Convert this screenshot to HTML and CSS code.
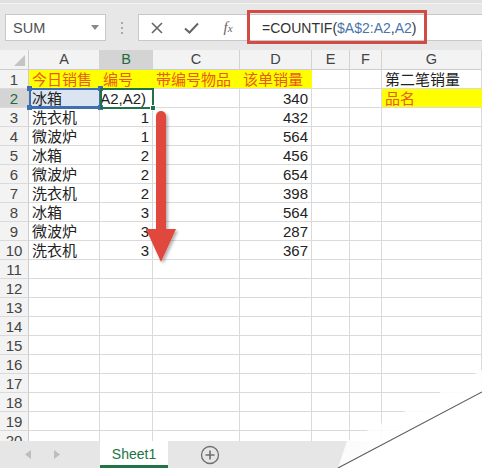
FILE: index.html
```html
<!DOCTYPE html>
<html lang="zh">
<head>
<meta charset="utf-8">
<title>COUNTIF</title>
<link rel="stylesheet" href="styles.css">
</head>
<body>
<div class="app">
  <div class="fbar">
    <div class="namebox"><span>SUM</span><svg class="dd" width="8" height="5" viewBox="0 0 8 5"><path d="M0 0H8L4 5Z" fill="#888"/></svg></div>
    <div class="dots"><i></i><i></i><i></i></div>
    <div class="finput">
      <div class="fbtn"><svg width="12" height="12" viewBox="0 0 12 12"><path d="M1 1L11 11M11 1L1 11" stroke="#666" stroke-width="1.6" fill="none"/></svg></div>
      <div class="fbtn"><svg width="15" height="12" viewBox="0 0 15 12"><path d="M1 6.5L5.5 10.5L14 1.5" stroke="#666" stroke-width="2" fill="none"/></svg></div>
      <div class="fbtn fx">f<sub>x</sub></div>
      <div class="ftext">=COUNTIF(<span class="ref">$A$2:A2</span>,<span class="ref">A2</span>)</div>
    </div>
  </div>

  <div class="sheet">
    <div class="row hdr">
      <div class="corner"><svg width="12" height="12" viewBox="0 0 12 12"><path d="M11 0V11H0Z" fill="#c4c4c4"/></svg></div>
      <div class="ch">A</div><div class="ch on">B</div><div class="ch">C</div><div class="ch">D</div><div class="ch">E</div><div class="ch">F</div><div class="ch">G</div>
    </div>
    <div class="row">
      <div class="rh">1</div><div class="c y">今日销售</div><div class="c y">编号</div><div class="c y">带编号物品</div><div class="c y">该单销量</div><div class="c"></div><div class="c"></div><div class="c">第二笔销量</div>
    </div>
    <div class="row">
      <div class="rh on">2</div><div class="c sel">冰箱</div><div class="c edit"><span>=COUNTIF($A$2:A2,A2)</span></div><div class="c"></div><div class="c n">340</div><div class="c"></div><div class="c"></div><div class="c y">品名</div>
    </div>
    <div class="row">
      <div class="rh">3</div><div class="c">洗衣机</div><div class="c n">1</div><div class="c"></div><div class="c n">432</div><div class="c"></div><div class="c"></div><div class="c"></div>
    </div>
    <div class="row">
      <div class="rh">4</div><div class="c">微波炉</div><div class="c n">1</div><div class="c"></div><div class="c n">564</div><div class="c"></div><div class="c"></div><div class="c"></div>
    </div>
    <div class="row">
      <div class="rh">5</div><div class="c">冰箱</div><div class="c n">2</div><div class="c"></div><div class="c n">456</div><div class="c"></div><div class="c"></div><div class="c"></div>
    </div>
    <div class="row">
      <div class="rh">6</div><div class="c">微波炉</div><div class="c n">2</div><div class="c"></div><div class="c n">654</div><div class="c"></div><div class="c"></div><div class="c"></div>
    </div>
    <div class="row">
      <div class="rh">7</div><div class="c">洗衣机</div><div class="c n">2</div><div class="c"></div><div class="c n">398</div><div class="c"></div><div class="c"></div><div class="c"></div>
    </div>
    <div class="row">
      <div class="rh">8</div><div class="c">冰箱</div><div class="c n">3</div><div class="c"></div><div class="c n">564</div><div class="c"></div><div class="c"></div><div class="c"></div>
    </div>
    <div class="row">
      <div class="rh">9</div><div class="c">微波炉</div><div class="c n">3</div><div class="c"></div><div class="c n">287</div><div class="c"></div><div class="c"></div><div class="c"></div>
    </div>
    <div class="row">
      <div class="rh">10</div><div class="c">洗衣机</div><div class="c n">3</div><div class="c"></div><div class="c n">367</div><div class="c"></div><div class="c"></div><div class="c"></div>
    </div>
    <div class="row"><div class="rh">11</div><div class="c"></div><div class="c"></div><div class="c"></div><div class="c"></div><div class="c"></div><div class="c"></div><div class="c"></div></div>
    <div class="row"><div class="rh">12</div><div class="c"></div><div class="c"></div><div class="c"></div><div class="c"></div><div class="c"></div><div class="c"></div><div class="c"></div></div>
    <div class="row"><div class="rh">13</div><div class="c"></div><div class="c"></div><div class="c"></div><div class="c"></div><div class="c"></div><div class="c"></div><div class="c"></div></div>
    <div class="row"><div class="rh">14</div><div class="c"></div><div class="c"></div><div class="c"></div><div class="c"></div><div class="c"></div><div class="c"></div><div class="c"></div></div>
    <div class="row"><div class="rh">15</div><div class="c"></div><div class="c"></div><div class="c"></div><div class="c"></div><div class="c"></div><div class="c"></div><div class="c"></div></div>
    <div class="row"><div class="rh">16</div><div class="c"></div><div class="c"></div><div class="c"></div><div class="c"></div><div class="c"></div><div class="c"></div><div class="c"></div></div>
    <div class="row"><div class="rh">17</div><div class="c"></div><div class="c"></div><div class="c"></div><div class="c"></div><div class="c"></div><div class="c"></div><div class="c"></div></div>
    <div class="row"><div class="rh">18</div><div class="c"></div><div class="c"></div><div class="c"></div><div class="c"></div><div class="c"></div><div class="c"></div><div class="c"></div></div>
    <div class="row"><div class="rh">19</div><div class="c"></div><div class="c"></div><div class="c"></div><div class="c"></div><div class="c"></div><div class="c"></div><div class="c"></div></div>
    <div class="row"><div class="rh">20</div><div class="c"></div><div class="c"></div><div class="c"></div><div class="c"></div><div class="c"></div><div class="c"></div><div class="c"></div></div>

    <div class="refbox"><i class="h tl"></i><i class="h tr"></i><i class="h bl"></i><i class="h br"></i></div>
    <div class="activebox"><i class="fill"></i></div>
  </div>

  <div class="tabs">
    <div class="nav">
      <svg width="6" height="9" viewBox="0 0 6 9"><path d="M6 0V9L0 4.5Z" fill="#bdbdbd"/></svg>
      <svg width="6" height="9" viewBox="0 0 6 9"><path d="M0 0V9L6 4.5Z" fill="#bdbdbd"/></svg>
    </div>
    <div class="tab">Sheet1</div>
    <div class="add"><svg width="20" height="20" viewBox="0 0 20 20"><circle cx="10" cy="10" r="8.5" stroke="#6f6f6f" stroke-width="1.3" fill="none"/><path d="M10 5.5V14.5M5.5 10H14.5" stroke="#6f6f6f" stroke-width="1.6"/></svg></div>
  </div>
</div>

<svg class="overlay" width="482" height="468" viewBox="0 0 482 468">
  <defs>
    <filter id="sh" x="-50%" y="-10%" width="200%" height="130%">
      <feDropShadow dx="2" dy="2" stdDeviation="1.6" flood-color="#000" flood-opacity="0.3"/>
    </filter>
    <linearGradient id="flap" x1="0" y1="0" x2="1" y2="1" gradientUnits="objectBoundingBox">
      <stop offset="0" stop-color="#fff" stop-opacity="0.55"/>
      <stop offset="0.6" stop-color="#fff" stop-opacity="0.97"/>
      <stop offset="1" stop-color="#f6f6f6" stop-opacity="1"/>
    </linearGradient>
  </defs>
  <rect x="248.5" y="11.5" width="177" height="31" fill="none" stroke="#d24c45" stroke-width="3"/>
  <g filter="url(#sh)" fill="#e0463c">
    <rect x="156" y="111" width="10" height="124" rx="5"/>
    <path d="M146 229H176L161 262Z"/>
  </g>
  <path d="M338 468L347 441L400 414L482 370V392Z" fill="url(#flap)"/>
  <path d="M338 468L482 392V468Z" fill="#fff"/>
  <path d="M338 468L482 392" stroke="#5a5a5a" stroke-width="1.1" fill="none"/>
</svg>
</body>
</html>
```

FILE: styles.css
```css
* { box-sizing: border-box; }

html, body {
  margin: 0;
  padding: 0;
}

body {
  width: 482px;
  height: 468px;
  overflow: hidden;
  position: relative;
  background: #fff;
  font-family: "Liberation Sans", "Noto Sans CJK SC", sans-serif;
  color: #222;
}

.app {
  display: flex;
  flex-direction: column;
  height: 468px;
}

/* formula bar */
.fbar {
  height: 50px;
  flex: none;
  background: #e7e7e7;
  border-top: 3px solid #e0e0e0;
  box-shadow: inset 0 1px 0 #f3f3f3;
  display: flex;
  align-items: flex-start;
  padding-top: 11px;
}

.namebox {
  margin-left: 5px;
  width: 101px;
  height: 27px;
  background: #fff;
  border: 1px solid #c8c8c8;
  display: flex;
  align-items: center;
  justify-content: space-between;
  padding: 0 6px 0 7px;
  font-size: 14.5px;
  color: #505050;
}

.dots {
  width: 32px;
  height: 27px;
  display: flex;
  flex-direction: column;
  align-items: center;
  justify-content: center;
  gap: 3px;
}

.dots i {
  display: block;
  width: 2px;
  height: 2px;
  background: #a9a9a9;
}

.finput {
  flex: 1;
  height: 27px;
  background: #fff;
  border: 1px solid #c8c8c8;
  border-right: none;
  display: flex;
  align-items: center;
}

.fbtn {
  width: 35px;
  height: 25px;
  display: flex;
  align-items: center;
  justify-content: center;
  flex: none;
}

.fx {
  width: 38px;
  font-family: "Liberation Serif", serif;
  font-style: italic;
  font-size: 15px;
  color: #666;
}

.fx sub {
  font-size: 11px;
  vertical-align: -2px;
}

.ftext {
  padding-left: 15px;
  font-size: 14px;
  color: #333;
  white-space: nowrap;
}

.ftext .ref { color: #4a74a8; }

/* sheet grid */
.sheet {
  position: relative;
  height: 391px;
  flex: none;
  overflow: hidden;
}

.row {
  display: grid;
  grid-template-columns: 29px 71px 53px 87px 72px 38px 32px 100px;
  height: 19px;
}

.row.hdr { height: 20px; }

.corner,
.ch,
.rh,
.c {
  display: flex;
  align-items: center;
  white-space: nowrap;
  line-height: 1;
}

.corner {
  background: #f3f3f3;
  border-right: 1px solid #cdcdcd;
  border-bottom: 1px solid #cdcdcd;
  justify-content: flex-end;
  align-items: flex-end;
  padding: 0 2px 2px 0;
}

.ch {
  justify-content: center;
  background: #f3f3f3;
  border-right: 1px solid #d3d3d3;
  border-bottom: 1px solid #cdcdcd;
  font-size: 14.5px;
  color: #444;
}

.rh {
  justify-content: center;
  background: #f3f3f3;
  border-right: 1px solid #cdcdcd;
  border-bottom: 1px solid #dadada;
  font-size: 15px;
  color: #444;
}

.ch.on,
.rh.on {
  background: #d4d4d4;
  color: #1d6a3f;
}

.c {
  border-right: 1px solid #dadada;
  border-bottom: 1px solid #dadada;
  padding: 1px 3px 0;
  font-size: 15px;
  color: #222;
}

.c.n { justify-content: flex-end; }

.c.y {
  background: #ffff00;
  color: #e8591b;
  border-right-color: #ffff00;
}

.c.sel { background: #dbe5f2; }

.c.edit {
  justify-content: flex-end;
  overflow: hidden;
  padding-right: 6px;
}

.c.edit span { flex: none; }

.refbox {
  position: absolute;
  left: 29px;
  top: 38px;
  width: 72px;
  height: 21px;
  border: 2px solid #3f6fb2;
  border-bottom-width: 3px;
}

.refbox .h {
  position: absolute;
  width: 5px;
  height: 5px;
  background: #3f6fb2;
}

.refbox .tl { left: -4px; top: -4px; }
.refbox .tr { right: -4px; top: -4px; }
.refbox .bl { left: -4px; bottom: -4px; }
.refbox .br { right: -4px; bottom: -4px; }

.activebox {
  position: absolute;
  left: 100px;
  top: 38px;
  width: 54px;
  height: 21px;
  border: 2px solid #217346;
}

.activebox .fill {
  position: absolute;
  right: -4px;
  bottom: -4px;
  width: 6px;
  height: 6px;
  background: #217346;
  border: 1px solid #fff;
}

/* sheet tabs */
.tabs {
  flex: 1;
  background: #e6e6e6;
  display: flex;
  align-items: stretch;
}

.nav {
  width: 100px;
  display: flex;
  align-items: center;
  gap: 23px;
  padding-left: 25px;
}

.tab {
  width: 68px;
  background: #fff;
  border-bottom: 3px solid #217346;
  display: flex;
  align-items: center;
  justify-content: center;
  padding-top: 2px;
  font-size: 14px;
  color: #217346;
}

.add {
  margin-left: 32px;
  display: flex;
  align-items: center;
}

.overlay {
  position: absolute;
  left: 0;
  top: 0;
  pointer-events: none;
}
```
